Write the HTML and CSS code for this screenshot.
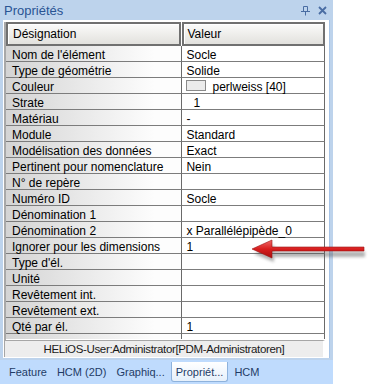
FILE: index.html
```html
<!DOCTYPE html>
<html lang="fr">
<head>
    <meta charset="UTF-8">
    <title>Propriétés</title>
    <link rel="stylesheet" href="styles.css">
</head>
<body>
    <div class="dock">
        <div class="dock-title">
            <span>Propriétés</span>
            <span class="dock-btns">
                <svg width="9" height="10" viewBox="0 0 9 10"><path d="M2.5 0.5h4v5h-4z M0 5.5h9 M4.5 5.5v4" fill="none" stroke="#4a6da3" stroke-width="1"/></svg>
                <svg width="9" height="9" viewBox="0 0 9 9"><path d="M1 1l7 7 M8 1l-7 7" stroke="#4a6da3" stroke-width="1.8"/></svg>
            </span>
        </div>

        <div class="dock-body">
            <div class="grid">
                <div class="grid-head">
                    <div class="hcell name">Désignation</div>
                    <div class="hcell value">Valeur</div>
                </div>
                <div class="row"><div class="cell name">Nom de l'élément</div><div class="cell value">Socle</div></div>
                <div class="row"><div class="cell name">Type de géométrie</div><div class="cell value">Solide</div></div>
                <div class="row"><div class="cell name">Couleur</div><div class="cell value"><span class="swatch"></span>perlweiss [40]</div></div>
                <div class="row"><div class="cell name">Strate</div><div class="cell value indent">1</div></div>
                <div class="row"><div class="cell name">Matériau</div><div class="cell value">-</div></div>
                <div class="row"><div class="cell name">Module</div><div class="cell value">Standard</div></div>
                <div class="row"><div class="cell name">Modélisation des données</div><div class="cell value">Exact</div></div>
                <div class="row"><div class="cell name">Pertinent pour nomenclature</div><div class="cell value">Nein</div></div>
                <div class="row"><div class="cell name">N° de repère</div><div class="cell value"></div></div>
                <div class="row"><div class="cell name">Numéro ID</div><div class="cell value">Socle</div></div>
                <div class="row"><div class="cell name">Dénomination 1</div><div class="cell value"></div></div>
                <div class="row"><div class="cell name">Dénomination 2</div><div class="cell value">x Parallélépipède_0</div></div>
                <div class="row"><div class="cell name">Ignorer pour les dimensions</div><div class="cell value">1</div></div>
                <div class="row"><div class="cell name">Type d'él.</div><div class="cell value"></div></div>
                <div class="row"><div class="cell name">Unité</div><div class="cell value"></div></div>
                <div class="row"><div class="cell name">Revêtement int.</div><div class="cell value"></div></div>
                <div class="row"><div class="cell name">Revêtement ext.</div><div class="cell value"></div></div>
                <div class="row"><div class="cell name">Qté par él.</div><div class="cell value">1</div></div>
                <div class="row partial"><div class="cell name"></div><div class="cell value"></div></div>
            </div>
            <div class="status">HELiOS-User:Administrator[PDM-Administratoren]</div>
        </div>

        <div class="tabs">
            <span class="tab">Feature</span>
            <span class="tab">HCM (2D)</span>
            <span class="tab">Graphiq...</span>
            <span class="tab active">Propriét...</span>
            <span class="tab">HCM</span>
        </div>
    </div>

    <!-- red callout arrow pointing at the "Ignorer" value -->
    <svg class="callout" width="122" height="30" viewBox="0 0 122 30">
        <defs>
            <linearGradient id="red" x1="0" y1="0" x2="0" y2="1">
                <stop offset="0" stop-color="#f06a6a"/>
                <stop offset="0.5" stop-color="#d81e1e"/>
                <stop offset="1" stop-color="#a80f0f"/>
            </linearGradient>
            <filter id="shadow" x="-10%" y="-30%" width="130%" height="180%">
                <feGaussianBlur stdDeviation="1.5"/>
            </filter>
        </defs>
        <path d="M5 15 L25 6 L25 12.5 L116 12.5 L116 18 L25 18 L25 23 Z" transform="translate(1 3)" fill="#555" opacity="0.45" filter="url(#shadow)"/>
        <path d="M4 13 L24 4 L24 11 L116 11 L116 15 L24 15 L24 22 Z" fill="url(#red)" stroke="#9c1010" stroke-width="0.6"/>
    </svg>
</body>
</html>
```

FILE: styles.css
```css
* {
    margin: 0;
    padding: 0;
    box-sizing: border-box;
}

body {
    font-family: "Liberation Sans", Arial, sans-serif;
    font-size: 12px;
    background-color: #fff;
    color: #000;
    width: 370px;
    height: 384px;
    position: relative;
    overflow: hidden;
}

.dock {
    width: 333px;
    height: 384px;
    background-color: #bdd3ec;
    display: flex;
    flex-direction: column;
}

.dock-title {
    height: 20px;
    flex-shrink: 0;
    display: flex;
    align-items: center;
    justify-content: space-between;
    padding: 1px 6px 0 4px;
    color: #2a5493;
    font-size: 13px;
}

.dock-btns {
    display: flex;
    align-items: center;
    gap: 8px;
}

.dock-body {
    margin: 0 3px;
    height: 338px;
    flex-shrink: 0;
    background-color: #fff;
    padding: 2px 4px 0 1px;
    border-right: 1px solid #a7c4e6;
}

.grid {
    height: 318px;
    overflow: hidden;
    border-left: 2px solid #a8a8a8;
}

.grid-head {
    display: flex;
    height: 24px;
}

.hcell {
    display: flex;
    align-items: center;
    padding-left: 5px;
    border: 2px solid #707070;
    box-shadow: inset 1px 1px 0 #fff;
    background: linear-gradient(#fbfbfa, #e2e1dd);
}

.hcell.name {
    width: 176px;
    margin-right: 1px;
}

.hcell.value {
    width: 143px;
    padding-left: 3px;
}

.row {
    display: flex;
    height: 16px;
}

.row.partial {
    height: 5px;
}

.cell {
    display: flex;
    align-items: center;
    padding-top: 3px;
    border-bottom: 1px solid #7c7c7c;
    white-space: nowrap;
    line-height: 15px;
}

.cell.name {
    width: 177px;
    padding-left: 6px;
    border-right: 1px solid #6a6a6a;
    background: linear-gradient(to right, #d4d4d4, #fdfdfd 85%);
}

.cell.value {
    width: 143px;
    padding-left: 4px;
    border-right: 1px solid #6a6a6a;
}

.row.partial .cell {
    border-bottom: none;
}

.cell.indent {
    padding-left: 11px;
}

.swatch {
    width: 20px;
    height: 11px;
    margin-right: 6px;
    margin-top: -3px;
    border: 1px solid #8a8a8a;
    background-color: #ebebeb;
}

.status {
    height: 17px;
    border-top: 1px solid #a6a6a6;
    border-left: 1px solid #a6a6a6;
    border-right: 2px solid #fff;
    background-color: #ededed;
    display: flex;
    align-items: center;
    justify-content: center;
    font-size: 11.5px;
    letter-spacing: -0.35px;
    color: #1a1a1a;
}

.tabs {
    flex: 1;
    margin-top: 2px;
    background-color: #bfdbfd;
    display: flex;
    align-items: flex-start;
    padding: 2px 0 0 4px;
    color: #1f3b66;
    font-size: 11px;
}

.tab {
    padding: 4px 5px 4px;
}

.tab.active {
    padding: 4px 4px 4px;
    margin: 0 1px;
    height: 20px;
    background: linear-gradient(#ffffff, #e6f0fb);
    border: 1px solid #8eb2dc;
    border-top: none;
    border-radius: 0 0 3px 3px;
}

.callout {
    position: absolute;
    left: 248px;
    top: 236px;
}
```
